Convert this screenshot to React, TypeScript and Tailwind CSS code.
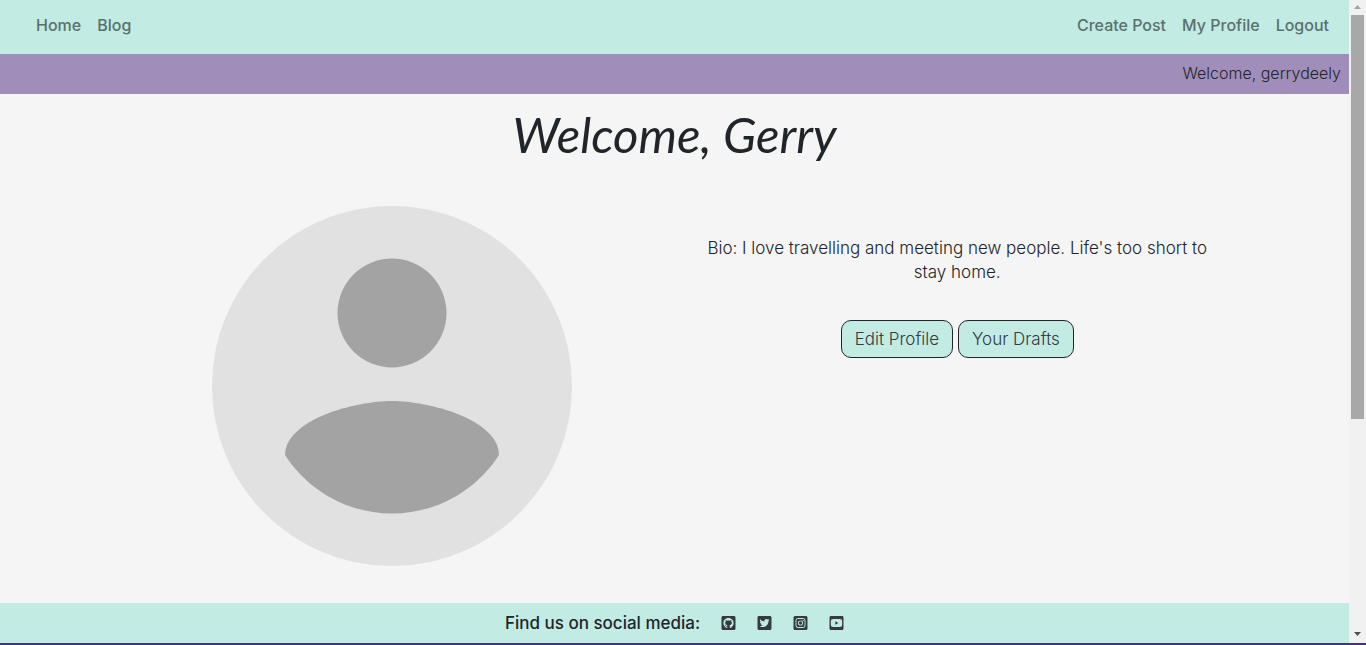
import type { ReactNode } from 'react';
import { FaGithubSquare, FaInstagramSquare, FaTwitterSquare, FaYoutubeSquare } from 'react-icons/fa';

const socials = [
  { label: 'GitHub', Icon: FaGithubSquare },
  { label: 'Twitter', Icon: FaTwitterSquare },
  { label: 'Instagram', Icon: FaInstagramSquare },
  { label: 'YouTube', Icon: FaYoutubeSquare },
];

function NavLinks({ items }: { items: string[] }) {
  return (
    <ul className="flex gap-4">
      {items.map((item) => (
        <li key={item}>
          <a href="#" className="text-[#5a706c]">{item}</a>
        </li>
      ))}
    </ul>
  );
}

function ActionButton({ children }: { children: ReactNode }) {
  return (
    <button
      type="button"
      className="rounded-[10px] border border-[#212529] bg-[#c2ebe4] px-[13px] py-1.5 text-[#343a40]"
    >
      {children}
    </button>
  );
}

function Avatar() {
  return (
    <svg viewBox="0 0 360 360" className="w-full max-w-[360px]" role="img" aria-label="Profile picture">
      <circle cx="180" cy="180" r="180" fill="#e1e1e1" />
      <circle cx="180" cy="107" r="54.5" fill="#a3a3a3" />
      <path
        d="M73 249C73.5 213 144 195 180 195C216 195 286.5 213 287 249C264 284.5 224.6 307.5 180 307.5S96 284.5 73 249Z"
        fill="#a3a3a3"
      />
    </svg>
  );
}

function ScrollTrack() {
  return (
    <div aria-hidden="true" className="flex w-[17px] shrink-0 flex-col items-center bg-[#f1f1f1]">
      <svg viewBox="0 0 17 15" className="h-[15px] w-[17px]">
        <path d="M5 9h7L8.500 5z" fill="#a3a3a3" />
      </svg>
      <div className="w-[13px] grow-[404] bg-[#a8a8a8]" />
      <div className="grow-[207]" />
      <svg viewBox="0 0 17 17" className="h-[17px] w-[17px]">
        <path d="M5 6h7L8.500 10z" fill="#505050" />
      </svg>
    </div>
  );
}

export default function App() {
  return (
    <div className="flex min-h-screen flex-col bg-[#f5f5f5] font-['Inter',sans-serif] text-base text-[#212529]">
      <div className="flex flex-1">
        <div className="flex min-w-0 flex-1 flex-col">
          <nav className="flex justify-between bg-[#c2ebe4] pt-[13px] pr-5 pb-[17px] pl-9 font-medium">
            <NavLinks items={['Home', 'Blog']} />
            <NavLinks items={['Create Post', 'My Profile', 'Logout']} />
          </nav>
          <div className="bg-[#a08db9] px-2 pt-[7px] pb-[9px] text-right font-light">Welcome, gerrydeely</div>

          <main className="flex-1">
            <h1 className="pt-1.5 pb-0.5 text-center font-['Lato',sans-serif] text-[49px] leading-[68px] font-normal italic">
              Welcome, Gerry
            </h1>
            <div className="mx-auto my-9 grid max-w-[1131px] grid-cols-2">
              <div className="flex justify-center">
                <Avatar />
              </div>
              <div className="flex flex-col items-center pt-[30px] text-[17px] leading-6 font-light">
                <p className="max-w-[510px] text-center">
                  Bio: I love travelling and meeting new people. Life's too short to stay home.
                </p>
                <div className="mt-9 flex gap-[5px]">
                  <ActionButton>Edit Profile</ActionButton>
                  <ActionButton>Your Drafts</ActionButton>
                </div>
              </div>
            </div>
          </main>

          <footer className="flex items-center justify-center gap-[21px] bg-[#c2ebe4] py-2 text-[17px] leading-6">
            <span className="font-medium">Find us on social media:</span>
            {socials.map(({ label, Icon }) => (
              <a key={label} href="#" aria-label={label} className="text-[#343a40]">
                <Icon className="h-4 w-[15px]" />
              </a>
            ))}
          </footer>
        </div>
        <ScrollTrack />
      </div>
      <div className="h-0.5 bg-[#432f92]" />
    </div>
  );
}
